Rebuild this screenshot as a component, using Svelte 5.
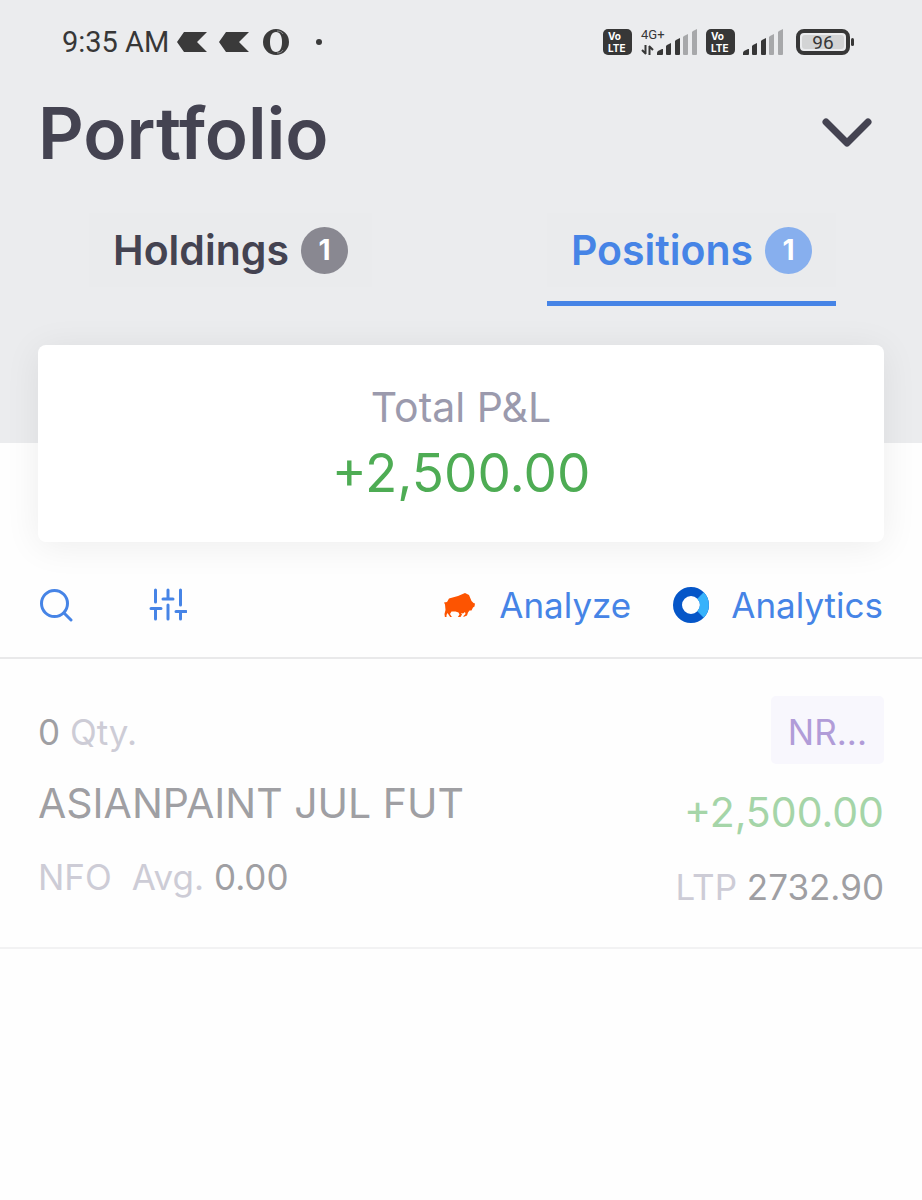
<!-- Portfolio.svelte -->
<script>
  let activeTab = $state('positions');

  const tabs = [
    { id: 'holdings', label: 'Holdings', count: 1 },
    { id: 'positions', label: 'Positions', count: 1 }
  ];

  const positions = [
    {
      qty: 0,
      name: 'ASIANPAINT JUL FUT',
      exchange: 'NFO',
      avg: '0.00',
      product: 'NR...',
      pnl: '+2,500.00',
      ltp: '2732.90'
    }
  ];
</script>

{#snippet volte()}
  <span class="volte"><span>Vo</span><span>LTE</span></span>
{/snippet}

{#snippet signal()}
  <svg class="signal" width="41" height="27" viewBox="0 0 41 27">
    <g fill="#373737">
      <path d="M0 26v-2q0-1 1-2l4-2h1v5q0 1-1 1z" />
      <path d="M9 25v-8l1-1 4-2v11q0 1-1 1h-3q-1 0-1-1z" />
      <path d="M18 25V12l1-1 4-2v16q0 1-1 1h-3q-1 0-1-1z" />
    </g>
    <g fill="#a7a8aa">
      <path d="M26 25V8l1-1 4-2v20q0 1-1 1h-3q-1 0-1-1z" />
      <path d="M35 25V3l1-1 4-2v25q0 1-1 1h-3q-1 0-1-1z" />
    </g>
  </svg>
{/snippet}

<div class="app">
  <header>
    <div class="status">
      <div class="status-left">
        <span class="time">9:35 AM</span>
        <svg width="30" height="20" viewBox="0 0 30 20"><path d="M0 10 7 0H30L20 10 30 20H7z" fill="#3a3a3a" /></svg>
        <svg class="second" width="30" height="20" viewBox="0 0 30 20"><path d="M0 10 7 0H30L20 10 30 20H7z" fill="#3a3a3a" /></svg>
        <svg width="26" height="26" viewBox="0 0 26 26">
          <path fill="#3a3a3a" fill-rule="evenodd" d="M13 0a13 13 0 1 0 0 26 13 13 0 0 0 0-26zM13 3c4 0 6 4 6 10s-2 10-6 10-6-4-6-10 2-10 6-10z" />
          <path d="M14 2c3 0 5 1 6 3M14 24c3 0 5-1 6-3" fill="none" stroke="#8c8d8f" stroke-width="1" />
        </svg>
        <span class="dot"></span>
      </div>
      <div class="status-right">
        {@render volte()}
        <div class="network">
          <span class="net-type">4G+</span>
          <svg width="13" height="10" viewBox="0 0 13 10">
            <path d="M4.500 0v9M5 9 1 5M8.500 10V1M8 1l4 4" fill="none" stroke="#373737" stroke-width="2" />
          </svg>
        </div>
        {@render signal()}
        {@render volte()}
        {@render signal()}
        <div class="battery"><span>96</span></div>
      </div>
    </div>

    <div class="title-row">
      <h1>Portfolio</h1>
      <button class="icon-btn" aria-label="Expand">
        <svg width="50" height="30" viewBox="0 0 50 30">
          <path d="M4 4l21 21L46 4" fill="none" stroke="#444351" stroke-width="7" stroke-linecap="round" stroke-linejoin="round" />
        </svg>
      </button>
    </div>

    <nav>
      {#each tabs as tab}
        <button class="tab" class:active={activeTab === tab.id} onclick={() => (activeTab = tab.id)}>
          <span class="tab-label">{tab.label}<span class="count">{tab.count}</span></span>
        </button>
      {/each}
    </nav>
  </header>

  <section class="card">
    <div class="card-label">Total P&amp;L</div>
    <div class="card-value">+2,500.00</div>
  </section>

  <div class="toolbar">
    <div class="tools">
      <button class="icon-btn" aria-label="Search">
        <svg width="34" height="34" viewBox="0 0 34 34" fill="none" stroke="#4684e6" stroke-width="3" stroke-linecap="round">
          <circle cx="15.500" cy="15.500" r="13" />
          <path d="M25 25l7 7" />
        </svg>
      </button>
      <button class="icon-btn" aria-label="Filter">
        <svg width="38" height="34" viewBox="0 0 38 34" fill="none" stroke="#4684e6" stroke-width="3" stroke-linecap="round">
          <path d="M6.500 2v12M2 20.500h10M6.500 21v10M19 2v8M14 11h10M19 17v14M31.500 2v15M27 23.500h10M31.500 24v7" />
        </svg>
      </button>
    </div>
    <div class="links">
      <a href="#analyze">
        <svg width="33" height="24" viewBox="0 0 33 24">
          <path fill="#fd5401" d="M0 9.500 3 9 5 5.500 14 3 21 0l4 2 2.500 6 2 2 1.500.5-.5 3-1.500 1-1.500 3-2 0-1.500 2-1 3-3.500 1.500 0-1 2-2-.5-2-2 1.500-2-.5 1 1.500-1.500 2.500-3 .5 2-3-1-2-3-1-4 0-1.500 2.500 1.500 2.500 1.500 1-2.500 0-3-4.500-1 2 0 3-1.500 0-.5-4 1-4-.5-5.500z" />
        </svg>
        Analyze
      </a>
      <a href="#analytics">
        <svg width="36" height="36" viewBox="0 0 36 36" fill="none" stroke-width="9">
          <circle cx="18" cy="18" r="13.500" stroke="#0556c8" />
          <path d="M27.500 8.500a13.500 13.500 0 0 1 0 19" stroke="#37b2fb" />
        </svg>
        Analytics
      </a>
    </div>
  </div>

  <main>
    {#each positions as p}
      <article class="position">
        <div class="left">
          <div class="qty"><span class="value">{p.qty}</span> Qty.</div>
          <div class="name">{p.name}</div>
          <div class="avg"><span class="exchange">{p.exchange}</span>Avg. <span class="value">{p.avg}</span></div>
        </div>
        <div class="right">
          <div class="product">{p.product}</div>
          <div class="pnl">{p.pnl}</div>
          <div class="ltp">LTP <span class="value">{p.ltp}</span></div>
        </div>
      </article>
    {/each}
  </main>
</div>

<style>
  :global(body) {
    background: #fefefe;
  }

  .app {
    font-family: Inter, "Liberation Sans", sans-serif;
    font-size: 35px;
    color: #444351;
  }

  svg {
    display: block;
    flex: none;
  }

  button {
    font: inherit;
    color: inherit;
    background: none;
    border: 0;
    padding: 0;
    cursor: pointer;
  }

  header {
    background: #ebecee;
    padding-bottom: 137px;
  }

  .status {
    display: flex;
    align-items: center;
    justify-content: space-between;
    height: 84px;
    padding: 0 72px 0 62px;
    font-family: Roboto, sans-serif;
    color: #373737;
  }

  .status-left,
  .status-right {
    display: flex;
    align-items: center;
  }

  .time {
    font-size: 29px;
    margin-right: 8px;
  }

  .second {
    margin: 0 14px 0 12px;
  }

  .dot {
    width: 6px;
    height: 6px;
    margin-left: 27px;
    border-radius: 50%;
    background: #3a3a3a;
  }

  .volte {
    display: flex;
    flex-direction: column;
    justify-content: center;
    box-sizing: border-box;
    width: 29px;
    height: 26px;
    padding-left: 5px;
    border-radius: 5px;
    background: #373737;
    color: #fff;
    font-family: Inter, sans-serif;
    font-size: 10px;
    font-weight: 700;
    line-height: 12px;
  }

  .network {
    display: flex;
    flex-direction: column;
    gap: 3px;
    width: 16px;
    padding-bottom: 3px;
    margin-left: 9px;
  }

  .net-type {
    font-size: 13px;
    line-height: 15px;
  }

  .signal {
    margin-right: 8px;
  }

  .volte + .signal {
    margin-left: 8px;
  }

  .battery {
    position: relative;
    display: flex;
    box-sizing: border-box;
    width: 54px;
    height: 26px;
    margin-left: 4px;
    padding: 2px;
    border: 4px solid #373737;
    border-radius: 8px;
  }

  .battery span {
    flex: 1;
    background: #d3d4d5;
    border-radius: 3px;
    font-size: 19px;
    line-height: 15px;
    text-align: center;
  }

  .battery::after {
    content: "";
    position: absolute;
    right: -8px;
    top: 5px;
    width: 3px;
    height: 8px;
    border-radius: 2px;
    background: #373737;
  }

  .title-row {
    display: flex;
    align-items: center;
    justify-content: space-between;
    padding: 1px 50px 0 38px;
  }

  h1 {
    margin: 0;
    font-size: 71px;
    font-weight: 600;
    line-height: 96px;
  }

  nav {
    display: grid;
    grid-template-columns: 1fr 1fr;
    justify-items: center;
    margin-top: 32px;
  }

  .tab {
    padding-bottom: 14px;
    border-bottom: 5px solid transparent;
    font-size: 41px;
    font-weight: 600;
  }

  .tab-label {
    display: flex;
    align-items: center;
    gap: 12px;
    padding: 0 24px;
    line-height: 74px;
    background: #eaebed;
  }

  .tab.active {
    color: #4684e6;
    border-color: #4684e6;
  }

  .count {
    width: 47px;
    line-height: 47px;
    border-radius: 50%;
    background: #898891;
    color: #fff;
    font-size: 28px;
    font-weight: 700;
    text-align: center;
  }

  .active .count {
    background: #87afee;
  }

  .card {
    position: relative;
    margin: -98px 38px 0;
    padding: 36px 0 29px;
    border-radius: 8px;
    background: #fff;
    box-shadow: 0 4px 36px rgba(0, 0, 0, 0.07);
    text-align: center;
  }

  .card-label {
    font-size: 41px;
    line-height: 52px;
    color: #9b9aad;
  }

  .card-value {
    font-size: 53px;
    line-height: 80px;
    color: #4eac54;
  }

  .toolbar {
    display: flex;
    align-items: center;
    justify-content: space-between;
    padding: 27px 39px 16px;
    border-bottom: 2px solid #e9e9ea;
    line-height: 72px;
  }

  .tools {
    display: flex;
    gap: 76px;
  }

  .links {
    display: flex;
    gap: 42px;
  }

  .links a {
    display: flex;
    align-items: center;
    gap: 22px;
    color: #4684e6;
    text-decoration: none;
  }

  .position {
    display: flex;
    justify-content: space-between;
    padding: 37px 38px 31px;
    border-bottom: 2px solid #f2f2f3;
    color: #cdccd6;
  }

  .value,
  .name {
    color: #9f9fa3;
  }

  .qty {
    line-height: 72px;
  }

  .name {
    font-size: 41px;
    line-height: 70px;
  }

  .avg {
    line-height: 78px;
  }

  .exchange {
    margin-right: 20px;
  }

  .right {
    display: flex;
    flex-direction: column;
    align-items: flex-end;
  }

  .product {
    padding: 4px 17px 0;
    border-radius: 5px;
    background: #f8f7fd;
    color: #b19cd8;
    line-height: 64px;
  }

  .pnl {
    font-size: 41px;
    line-height: 96px;
    color: #a5d5a8;
  }

  .ltp {
    line-height: 54px;
  }
</style>
